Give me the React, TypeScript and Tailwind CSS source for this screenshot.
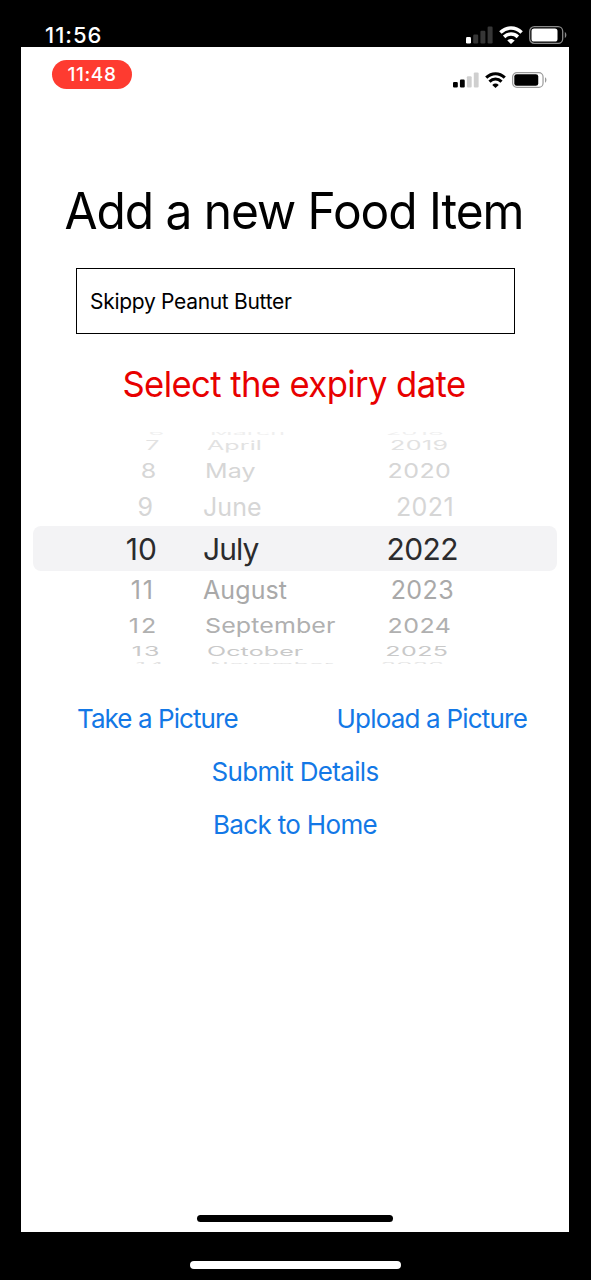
type Row = {
  day: string;
  month: string;
  year: string;
  box: string;
  squash: number;
  inset: number;
  nudge: number;
};

const rows: Row[] = [
  { day: '6', month: 'March', year: '2018', box: 'h-[10px] text-[25px] text-[#efefef]', squash: 0.26, inset: 7, nudge: -1 },
  { day: '7', month: 'April', year: '2019', box: 'h-[15px] text-[25px] text-[#e2e2e2]', squash: 0.5, inset: 4, nudge: 0.5 },
  { day: '8', month: 'May', year: '2020', box: 'h-[36px] text-[25px] text-[#d6d6d6]', squash: 0.8, inset: 2, nudge: 0 },
  { day: '9', month: 'June', year: '2021', box: 'h-[37px] text-[25px] text-[#d6d6d6]', squash: 1, inset: 0, nudge: -0.5 },
  { day: '10', month: 'July', year: '2022', box: 'h-[45px] text-[30px] text-[#2b2b2d]', squash: 1, inset: 0, nudge: -0.5 },
  { day: '11', month: 'August', year: '2023', box: 'h-[37px] text-[25px] text-[#a9a9a9]', squash: 1, inset: 0, nudge: 0.5 },
  { day: '12', month: 'September', year: '2024', box: 'h-[35px] text-[25px] text-[#b0b0b0]', squash: 0.82, inset: 2, nudge: 0.5 },
  { day: '13', month: 'October', year: '2025', box: 'h-[16px] text-[25px] text-[#c9c9c9]', squash: 0.5, inset: 4, nudge: 0 },
  { day: '14', month: 'November', year: '2026', box: 'h-[8px] text-[25px] text-[#e2e2e2]', squash: 0.26, inset: 7, nudge: 1 },
];

function Signal({ className, bars, dim }: { className: string; bars: number; dim: string }) {
  const tops = [10.5, 8, 4.5, 0.5];
  return (
    <svg viewBox="0 0 27 17" preserveAspectRatio="none" className={className}>
      {tops.map((y, i) => (
        <rect key={y} x={i * 7.2} y={y} width="5" height={16.5 - y} rx="1.2" fill={i < bars ? 'currentColor' : dim} />
      ))}
    </svg>
  );
}

function Wifi({ className }: { className: string }) {
  return (
    <svg viewBox="0 0 24 18" preserveAspectRatio="none" fill="none" stroke="currentColor" strokeWidth="3.5" className={className}>
      <path d="M1.4 6.4C7.6 .4 16.4 .4 22.6 6.4" />
      <path d="M5.1 10.9c4.1-3.8 9.7-3.8 13.8 0" />
      <path d="M8.3 14.5c2.2-2.1 5.2-2.1 7.4 0L12 18z" fill="currentColor" stroke="none" />
    </svg>
  );
}

function Battery({ className, rim }: { className: string; rim: string }) {
  return (
    <svg viewBox="0 0 38 18" preserveAspectRatio="none" className={className}>
      <rect x=".7" y=".7" width="33" height="16.6" rx="4.6" fill="none" stroke={rim} strokeWidth="1.3" />
      <rect x="2.5" y="2.5" width="26" height="13" rx="2.6" fill="currentColor" />
      <path d="M35.8 6c2.1.9 2.1 5.1 0 6z" fill={rim} />
    </svg>
  );
}

function DateWheel() {
  return (
    <div className="mx-3 h-[232px] overflow-hidden">
      <div className="-mt-1">
        {rows.map((row) => {
          const current = row.day === '10';
          const side = current ? 0 : 4;
          const move = (x: number) => ({
            transform: `translate(${x}px, ${row.nudge}px) scaleY(${row.squash})`,
          });
          return (
            <div
              key={row.day}
              className={`grid grid-cols-[124px_46px_150px_105px] content-center whitespace-nowrap leading-none ${row.box} ${
                current ? 'rounded-lg bg-[#f3f3f5] tracking-[-0.9px]' : 'tracking-[0.1px]'
              }`}
            >
              <span
                className={`origin-right text-right ${current ? 'tracking-normal' : '-mr-[2px] tracking-[2px]'}`}
                style={move(row.inset * 1.6 - side)}
              >
                {row.day}
              </span>
              <span />
              <span className="origin-left" style={move(row.inset)}>{row.month}</span>
              <span
                className={`origin-right text-right ${current ? 'tracking-[-0.6px]' : 'tracking-[0.4px]'}`}
                style={move(-row.inset * 1.4 - side)}
              >
                {row.year}
              </span>
            </div>
          );
        })}
      </div>
    </div>
  );
}

export default function App() {
  return (
    <div className="flex h-[1280px] w-[591px] flex-col bg-black font-['Inter',sans-serif]">
      {/* Outer status bar */}
      <header className="flex h-[47px] items-start pt-[26px] pl-[45px] text-white">
        <span className="mr-auto text-[22px] leading-[19px] font-medium tracking-[1px]">11:56</span>
        <Signal className="mr-[6px] h-[18px] w-[27px]" bars={1} dim="#363636" />
        <Wifi className="mr-[6px] h-[18px] w-[24px]" />
        <Battery className="mr-[24px] h-[18px] w-[38px]" rim="#8a8a8a" />
      </header>

      <main className="ml-[21px] flex h-[1185px] w-[548px] flex-col bg-white text-black">
        <div className="flex h-[42px] items-start pt-[13px] pl-[31px]">
          <span className="mr-auto flex h-[29px] w-[80px] items-center justify-center rounded-full bg-[#fe3b30] pt-[2px] text-[19px] font-medium tracking-[0.6px] text-white">
            11:48
          </span>
          <Signal className="mt-[12px] mr-[6px] h-[16px] w-[26px]" bars={2} dim="#cfcfcf" />
          <Wifi className="mt-[12px] mr-[6px] h-[16px] w-[21px]" />
          <Battery className="mt-[12px] mr-[22px] h-[16px] w-[35px]" rim="#9a9a9a" />
        </div>

        <h1 className="mt-[92px] -ml-[2px] scale-x-[0.958] text-center text-[50px] leading-[60px] tracking-[-1.1px] whitespace-nowrap">
          Add a new Food Item
        </h1>

        <div className="mt-[27px] ml-[55px] flex h-[66px] w-[439px] items-center border-[1.5px] border-black pt-[2px] pl-[13px] text-[21px] tracking-[-0.3px]">
          Skippy Peanut Butter
        </div>

        <h2 className="mt-[28px] mb-[26px] -ml-[2px] scale-x-[0.961] text-center text-[36px] leading-[44px] tracking-[-0.6px] whitespace-nowrap text-[#e80000]">
          Select the expiry date
        </h2>

        <DateWheel />

        <div className="mt-[38px] flex justify-between pr-[42px] pl-[56px] text-[26px] leading-[34px] text-[#1378e6]">
          <button className="tracking-[-0.93px]">Take a Picture</button>
          <button className="tracking-[-0.8px]">Upload a Picture</button>
        </div>
        <div className="mt-[19px] flex flex-col items-center gap-[19px] text-[26px] leading-[34px] tracking-[-0.67px] text-[#1378e6]">
          <button>Submit Details</button>
          <button>Back to Home</button>
        </div>

        <div className="mx-auto mt-auto mb-[10px] h-[7px] w-[196px] rounded-full bg-black" />
      </main>

      <div className="mx-auto mt-[29px] h-[8px] w-[211px] rounded-full bg-white" />
    </div>
  );
}
